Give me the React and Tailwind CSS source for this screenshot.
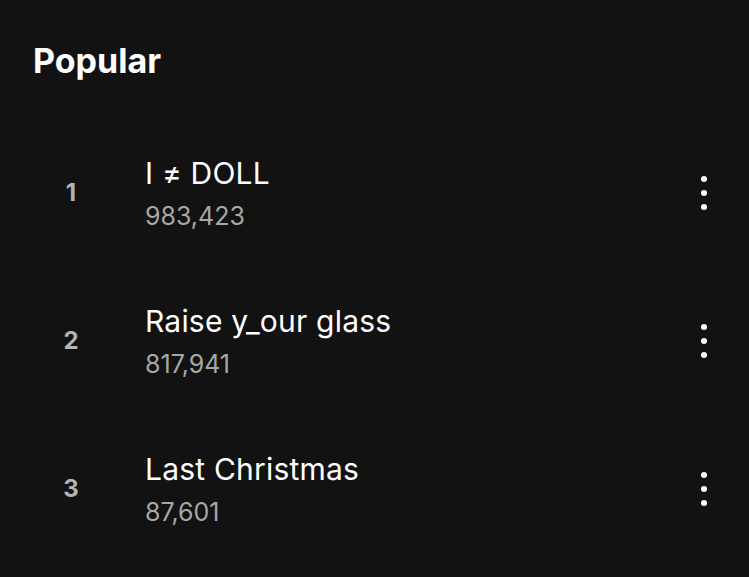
import React from "react";

const tracks = [
  { n: 1, title: "I ≠ DOLL", plays: "983,423" },
  { n: 2, title: "Raise y_our glass", plays: "817,941" },
  { n: 3, title: "Last Christmas", plays: "87,601" },
];

function Dots() {
  return (
    <svg width="8" height="36" viewBox="0 0 8 36" fill="white">
      <circle cx="4" cy="4" r="3" />
      <circle cx="4" cy="18" r="3" />
      <circle cx="4" cy="32" r="3" />
    </svg>
  );
}

export default function App() {
  return (
    <div
      className="w-[749px] h-[577px] bg-[#121212] text-white overflow-hidden"
      style={{ fontFamily: "Inter, 'Noto Sans', sans-serif" }}
    >
      <div className="h-[119px] pl-[33px] pt-[39px]">
        <h1 className="text-[34px] leading-[44px] font-bold">Popular</h1>
      </div>
      {tracks.map((t) => (
        <div key={t.n} className="h-[148px] flex items-center pr-[41px]">
          <div className="w-[145px] pl-[58px]">
            <div className="w-[26px] text-center text-[24px] font-bold text-[#b3b3b3]">{t.n}</div>
          </div>
          <div className="flex-1 flex flex-col">
            <div className="text-[30px] leading-[36px] text-white tracking-[0.2px]">{t.title}</div>
            <div className="text-[25px] leading-[30px] text-[#a7a7a7] mt-[10px]">{t.plays}</div>
          </div>
          <Dots />
        </div>
      ))}
    </div>
  );
}
